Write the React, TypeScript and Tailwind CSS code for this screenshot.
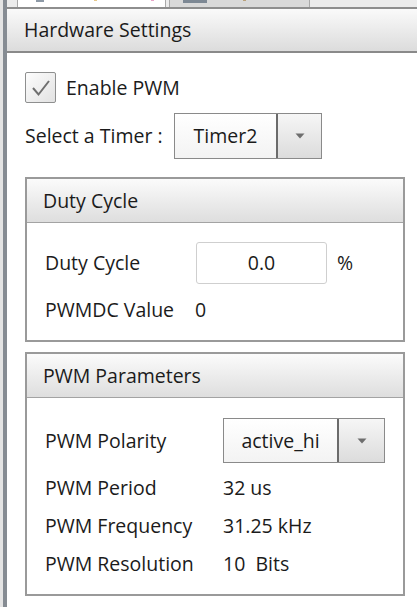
const font = { fontFamily: '"Open Sans", "Noto Sans", sans-serif' };

function DropArrow() {
  return (
    <svg width="10" height="6" viewBox="0 0 10 6" className="block">
      <path d="M0.5 0.5 L9.5 0.5 L5 5.5 Z" fill="#6e6e6e" />
    </svg>
  );
}

function ComboBox({ value, mainW, btnW }: { value: string; mainW: string; btnW: string }) {
  return (
    <div className="flex h-full border border-[#8a8a8a] bg-white">
      <div className={`${mainW} flex items-center justify-center bg-linear-to-b from-white to-[#f3f3f3]`}>
        {value}
      </div>
      <div
        className={`${btnW} flex items-center justify-center border-l-[2px] border-[#6b6b6b] bg-linear-to-b from-[#f6f6f6] to-[#dcdcdc]`}
      >
        <DropArrow />
      </div>
    </div>
  );
}

function GroupBox({ title, children, className = '' }: { title: string; children: React.ReactNode; className?: string }) {
  return (
    <div className={`border-[2px] border-[#9a9a9a] bg-white ${className}`}>
      <div className="h-[44px] flex items-center pl-[16px] border-b border-[#a3a3a3] bg-linear-to-b from-[#fbfbfb] to-[#dedede]">
        {title}
      </div>
      {children}
    </div>
  );
}

export default function App() {
  return (
    <div
      className="w-[417px] h-[607px] flex bg-white text-[19.5px] text-[#1b1b1b] overflow-hidden"
      style={font}
    >
      {/* left window edge */}
      <div className="w-[3px] bg-[#e4e4e4]" />
      <div className="w-[4px] bg-[#868c93]" />

      <div className="flex-1 flex flex-col">
        {/* tab strip (cut off) */}
        <div className="h-[7px] flex bg-[#ececec]">
          <div className="ml-[10px] w-[149px] h-full bg-white border-x border-[#a9a9a9] relative">
            <div className="absolute left-[18px] top-0 w-[8px] h-[2px] bg-[#8d99a6]" />
            <div className="absolute left-[76px] top-0 w-[3px] h-[1px] bg-[#e6c88a]" />
            <div className="absolute left-[133px] top-0 w-[3px] h-[1px] bg-[#e8a6c8]" />
          </div>
          <div className="ml-[3px] w-[141px] h-full bg-[#d9d9d9] border-x border-[#a9a9a9] relative">
            <div className="absolute left-[13px] top-0 w-[24px] h-[3px] bg-[#7d8894]" />
            <div className="absolute left-[73px] top-0 w-[3px] h-[1px] bg-[#b9a07a]" />
          </div>
        </div>

        {/* panel header */}
        <div className="h-[46px] flex items-center pl-[17px] border-t-[2px] border-b-[2px] border-t-[#8e8e8e] border-b-[#8a8a8a] bg-linear-to-b from-[#fafafa] to-[#dcdcdc]">
          Hardware Settings
        </div>

        <div className="flex flex-col pl-[18px] pr-[12px]">
          {/* enable checkbox */}
          <div className="mt-[19px] h-[31px] flex items-center">
            <div className="w-[31px] h-[31px] rounded-[2px] border border-[#8e8f8f] bg-linear-to-br from-[#fdfdfd] to-[#e2e2e2] flex items-center justify-center">
              <svg width="22" height="20" viewBox="0 0 22 20">
                <path d="M3 10 L8.5 16.5 L19 3" fill="none" stroke="#6f6f6f" strokeWidth="2" />
              </svg>
            </div>
            <span className="ml-[10px]">Enable PWM</span>
          </div>

          {/* timer select */}
          <div className="mt-[10px] h-[46px] flex items-center">
            <span className="w-[149px]">Select a Timer :</span>
            <ComboBox value="Timer2" mainW="w-[101px]" btnW="w-[45px]" />
          </div>

          <GroupBox title="Duty Cycle" className="mt-[18px]">
            <div className="pl-[18px] pt-[19px] pb-[17px]">
              <div className="h-[42px] flex items-center">
                <span className="w-[151px]">Duty Cycle</span>
                <div className="w-[131px] h-full rounded-[3px] border border-[#cfcfcf] flex items-center justify-center">
                  0.0
                </div>
                <span className="ml-[10px]">%</span>
              </div>
              <div className="mt-[13px] h-[26px] flex items-center">
                <span className="w-[150px]">PWMDC Value</span>
                <span>0</span>
              </div>
            </div>
          </GroupBox>

          <GroupBox title="PWM Parameters" className="mt-[10px]">
            <div className="pl-[18px] pt-[20px] pb-[11px]">
              <div className="h-[45px] flex items-center">
                <span className="w-[178px]">PWM Polarity</span>
                <ComboBox value="active_hi" mainW="w-[113px]" btnW="w-[47px]" />
              </div>
              <div className="mt-[6px] h-[38px] flex items-center">
                <span className="w-[178px]">PWM Period</span>
                <span>32 us</span>
              </div>
              <div className="h-[38px] flex items-center">
                <span className="w-[178px]">PWM Frequency</span>
                <span>31.25 kHz</span>
              </div>
              <div className="h-[38px] flex items-center">
                <span className="w-[178px]">PWM Resolution</span>
                <span>10&nbsp;&nbsp;Bits</span>
              </div>
            </div>
          </GroupBox>
        </div>
      </div>
    </div>
  );
}
